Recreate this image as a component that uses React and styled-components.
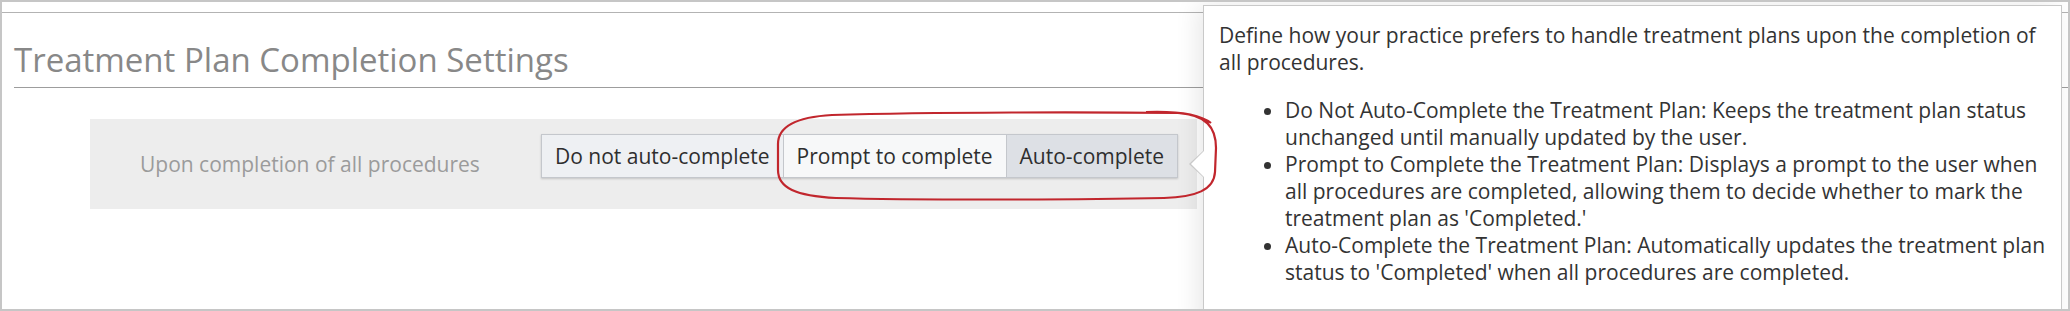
import styled, { createGlobalStyle } from "styled-components";

const GlobalStyle = createGlobalStyle`
    body {
        margin: 0;
        background: #fff;
        font-family: "Open Sans", "Liberation Sans", sans-serif;
    }
`

const Frame = styled.div`
    position: relative;
    width: 2070px;
    height: 311px;
    box-sizing: border-box;
    border: 2px solid #c6c6c6;
    background: #fff;
    overflow: hidden;
`

const TopBar = styled.div`
    height: 10px;
    border-bottom: 1px solid #b3b3b3;
`

const Content = styled.div`
    padding-left: 12px;
`

const Title = styled.h2`
    margin: 24px 0 0;
    padding-bottom: 5px;
    border-bottom: 1px solid #9d9d9d;
    font-size: 33px;
    line-height: 45px;
    font-weight: 400;
    color: #888;
`

const SettingRow = styled.div`
    display: flex;
    align-items: flex-start;
    width: 1107px;
    margin: 31px 0 0 76px;
    padding: 15px 0 31px 50px;
    box-sizing: border-box;
    background: #ededed;
`

const RowLabel = styled.span`
    width: 401px;
    margin-top: 17px;
    font-size: 21px;
    line-height: 27px;
    color: #9b9b9b;
`

const ButtonGroup = styled.div`
    display: flex;
    box-shadow: 0 1px 2px rgba(0, 0, 0, .18);
`

const tones = {
    plain: "#eef0f3",
    light: "#f7f8f9",
    active: "#dde0e5",
}

const ToggleButton = styled.button`
    height: 44px;
    padding: 0 13px;
    margin-left: -1px;
    border: 1px solid #c4c7cc;
    background: ${({ $tone }) => tones[$tone]};
    font-family: inherit;
    font-size: 21px;
    color: #2e2e2e;
    cursor: pointer;

    &:first-child {
        margin-left: 0;
    }
`

const Highlight = styled.svg`
    position: absolute;
    left: 772px;
    top: 108px;
    z-index: 3;
    overflow: visible;
`

const Popover = styled.div`
    position: absolute;
    top: 3px;
    left: 1201px;
    right: 6px;
    bottom: -20px;
    z-index: 2;
    padding: 16px 15px 0;
    border: 1px solid #c9c9c9;
    background: #fff;
    box-shadow: -6px 0 22px rgba(0, 0, 0, .09);
    font-size: 21px;
    line-height: 27px;
    color: #333;

    &::before,
    &::after {
        content: "";
        position: absolute;
        top: 145px;
        border-top: 13px solid transparent;
        border-bottom: 13px solid transparent;
    }

    &::before {
        left: -15px;
        border-right: 14px solid #c9c9c9;
    }

    &::after {
        left: -13px;
        border-right: 13px solid #fff;
    }
`

const Intro = styled.p`
    margin: 0 0 21px;
`

const Options = styled.ul`
    margin: 0;
    padding-left: 66px;
`

const App = () => {
    return (
        <>
            <GlobalStyle />
            <Frame>
                <TopBar />
                <Content>
                    <Title>Treatment Plan Completion Settings</Title>
                    <SettingRow>
                        <RowLabel>Upon completion of all procedures</RowLabel>
                        <ButtonGroup>
                            <ToggleButton $tone="plain">Do not auto-complete</ToggleButton>
                            <ToggleButton $tone="light">Prompt to complete</ToggleButton>
                            <ToggleButton $tone="active">Auto-complete</ToggleButton>
                        </ButtonGroup>
                    </SettingRow>
                </Content>

                <Highlight width="446" height="92" viewBox="0 0 446 92">
                    <path
                        d="M 58 5 C 160 2, 320 2, 404 3 C 432 5, 442 17, 442 38 L 441 62 C 440 80, 422 87, 390 88 C 300 90, 130 90, 62 88 C 22 86, 4 78, 4 60 L 4 34 C 4 16, 22 7, 58 5 Z M 372 2 C 400 1, 424 3, 437 13"
                        fill="none"
                        stroke="#c1262d"
                        strokeWidth="2.2"
                    />
                </Highlight>

                <Popover>
                    <Intro>
                        Define how your practice prefers to handle treatment plans upon the completion of all procedures.
                    </Intro>
                    <Options>
                        <li>Do Not Auto-Complete the Treatment Plan: Keeps the treatment plan status unchanged until manually updated by the user.</li>
                        <li>Prompt to Complete the Treatment Plan: Displays a prompt to the user when all procedures are completed, allowing them to decide whether to mark the treatment plan as 'Completed.'</li>
                        <li>Auto-Complete the Treatment Plan: Automatically updates the treatment plan status to 'Completed' when all procedures are completed.</li>
                    </Options>
                </Popover>
            </Frame>
        </>
    )
}

export default App;
